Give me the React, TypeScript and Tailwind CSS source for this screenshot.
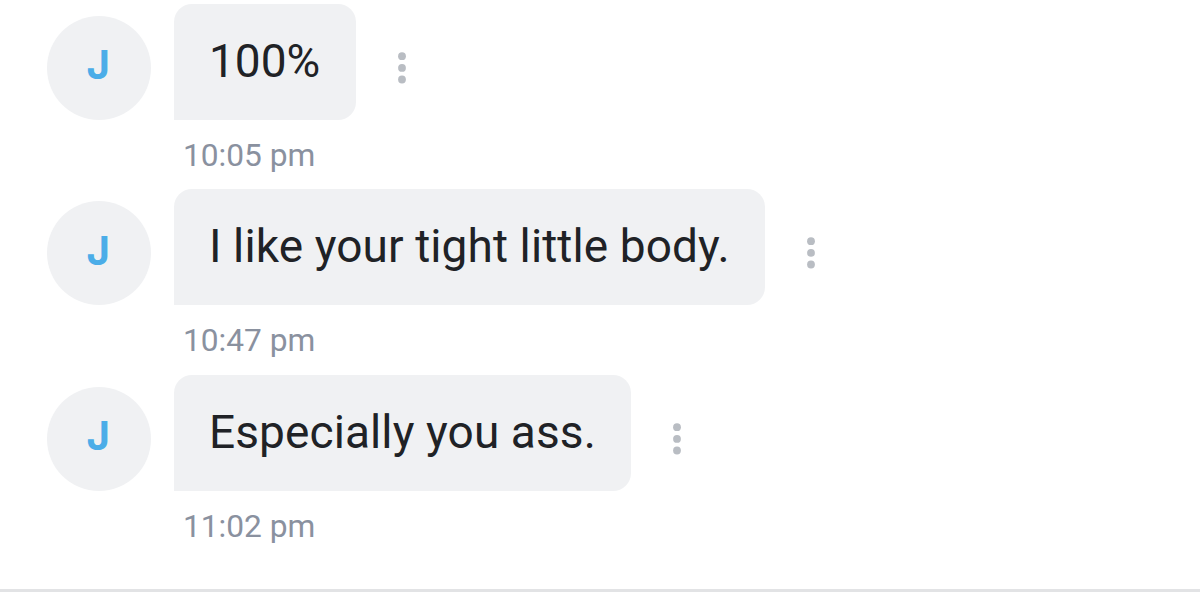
type Message = {
  id: number;
  initial: string;
  text: string;
  time: string;
  bubble: string;
};

const messages: Message[] = [
  { id: 1, initial: 'J', text: '100%', time: '10:05 pm', bubble: 'w-[182px]' },
  { id: 2, initial: 'J', text: 'I like your tight little body.', time: '10:47 pm', bubble: 'w-[591px] tracking-[0.1px]' },
  { id: 3, initial: 'J', text: 'Especially you ass.', time: '11:02 pm', bubble: 'w-[457px] tracking-[0.1px]' },
];

const MoreButton = () => (
  <button type="button" aria-label="More" className="ml-[42.5px] mt-3">
    <svg width="8" height="32" viewBox="0 0 8 32" fill="#b9bdc3">
      <circle cx="4" cy="4.2" r="3.9" />
      <circle cx="4" cy="15.9" r="3.9" />
      <circle cx="4" cy="27.5" r="3.9" />
    </svg>
  </button>
);

const MessageRow = ({ message }: { message: Message }) => (
  <div className="h-[185.5px]">
    <div className="flex h-[115.7px] items-end">
      <div className="flex size-[104px] shrink-0 items-center justify-center rounded-full bg-[#f0f1f3] pb-[5px] pr-px font-['Inter',sans-serif] text-[40px] font-bold leading-none text-[#4bade8]">
        {message.initial}
      </div>
      <div className={`ml-[23.2px] h-[115.7px] shrink-0 whitespace-nowrap rounded-[18px] rounded-bl-none bg-[#f0f1f3] pl-[35px] pt-[26.7px] text-[46px] leading-[60px] text-[#202226] ${message.bubble}`}>
        {message.text}
      </div>
      <div className="flex h-[115.7px] items-center">
        <MoreButton />
      </div>
    </div>
    <div className="ml-[136.2px] mt-[16.2px] text-[31.7px] leading-10 text-[#8a919f]">{message.time}</div>
  </div>
);

export default function App() {
  return (
    <div className="flex h-[593px] w-[1200px] flex-col justify-between overflow-hidden bg-white font-['Roboto',sans-serif]">
      <div className="pl-[46.8px] pt-[3.85px]">
        {messages.map((message) => (
          <MessageRow key={message.id} message={message} />
        ))}
      </div>
      <div className="h-1 border-t-[3px] border-[#e2e3e5]" />
    </div>
  );
}
